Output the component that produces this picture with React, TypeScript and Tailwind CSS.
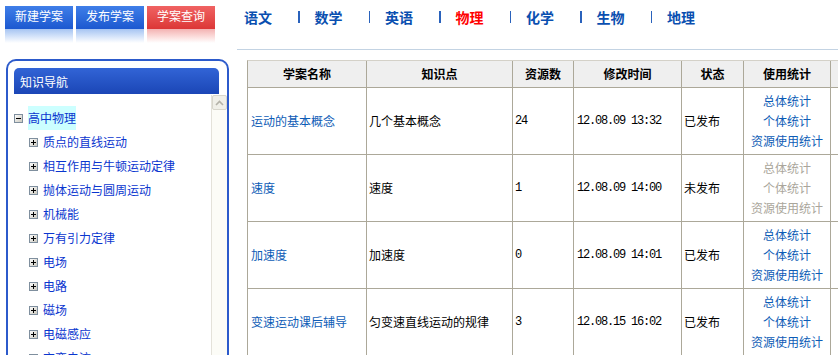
import type { ReactNode } from 'react';

const subjects = ['语文', '数学', '英语', '物理', '化学', '生物', '地理'];

const topics = [
  '质点的直线运动',
  '相互作用与牛顿运动定律',
  '抛体运动与圆周运动',
  '机械能',
  '万有引力定律',
  '电场',
  '电路',
  '磁场',
  '电磁感应',
  '交变电流',
];

type Plan = {
  name: string;
  point: string;
  count: number;
  time: string;
  status: string;
  published: boolean;
};

const plans: Plan[] = [
  { name: '运动的基本概念', point: '几个基本概念', count: 24, time: '12.08.09 13:32', status: '已发布', published: true },
  { name: '速度', point: '速度', count: 1, time: '12.08.09 14:00', status: '未发布', published: false },
  { name: '加速度', point: '加速度', count: 0, time: '12.08.09 14:01', status: '已发布', published: true },
  { name: '变速运动课后辅导', point: '匀变速直线运动的规律', count: 3, time: '12.08.15 16:02', status: '已发布', published: true },
];

const headers = ['学案名称', '知识点', '资源数', '修改时间', '状态', '使用统计', ''];

const TopButton = ({ label, red }: { label: string; red?: boolean }) => (
  <div className="w-[68px] h-[37px] flex flex-col">
    <div
      className={`h-[23px] pt-[3px] text-center text-white text-[12px] leading-[14px] bg-linear-to-b ${
        red ? 'from-[#f06262] to-[#dc3636]' : 'from-[#3f7ee8] to-[#1c58d0]'
      }`}
    >
      {label}
    </div>
    <div
      className={`h-[14px] bg-linear-to-b to-white ${red ? 'from-[#f3b2b2]' : 'from-[#a6c4f2]'}`}
    />
  </div>
);

const TreeBox = ({ open }: { open?: boolean }) => (
  <svg width="9" height="9" viewBox="0 0 9 9" className="shrink-0">
    <defs>
      <linearGradient id={open ? 'gm' : 'gp'} x1="0" y1="0" x2="1" y2="1">
        <stop offset="0" stopColor="#ffffff" />
        <stop offset="1" stopColor="#c8c6bc" />
      </linearGradient>
    </defs>
    <rect x="0.5" y="0.5" width="8" height="8" fill={`url(#${open ? 'gm' : 'gp'})`} stroke="#7f8f9e" />
    <line x1="2" y1="4.5" x2="7" y2="4.5" stroke="#000" />
    {!open && <line x1="4.5" y1="2" x2="4.5" y2="7" stroke="#000" />}
  </svg>
);

const Cell = ({ children, className = '' }: { children?: ReactNode; className?: string }) => (
  <div className={`border-r border-b border-[#aca899] flex items-center ${className}`}>{children}</div>
);

export default function App() {
  return (
    <div className="w-[838px] h-[355px] overflow-hidden bg-white flex font-['Noto_Sans_CJK_SC','Noto_Sans',sans-serif] text-[12px] text-black">
      {/* left column */}
      <div className="w-[237px] shrink-0">
        <div className="flex gap-[3px] pl-[5px] pt-[6px]">
          <TopButton label="新建学案" />
          <TopButton label="发布学案" />
          <TopButton label="学案查询" red />
        </div>

        <div className="ml-[6px] mt-[16px] w-[223px] h-[320px] border-2 border-b-0 border-[#2c5acb] rounded-t-[10px] pt-[7px]">
          <div className="ml-[6px] w-[205px] h-[26px] rounded-t-[5px] bg-linear-to-b from-[#3264d6] to-[#1b46b6] pl-[6px] text-white text-[12px] leading-[27px]">
            知识导航
          </div>

          <div className="mt-[1px] flex h-[280px]">
            <div className="flex-1 pt-[11px] text-[#0a36cf]">
              <div className="h-[24px] flex items-center pl-[6px]">
                <TreeBox open />
                <span className="ml-[5px] bg-[#ccffff] h-[24px] leading-[24px]">高中物理</span>
              </div>
              {topics.map((t) => (
                <div key={t} className="h-[24px] flex items-center pl-[21px]">
                  <TreeBox />
                  <span className="ml-[5px] leading-[24px] whitespace-nowrap">{t}</span>
                </div>
              ))}
            </div>
            <div className="w-[16px] bg-[#fcfcf7] border-l border-[#e4e2da]">
              <div className="h-[15px] bg-[#f0efe8] border border-[#d8d6cc] rounded-[2px] flex items-center justify-center">
                <svg width="9" height="6" viewBox="0 0 9 6">
                  <path d="M1 5 L4.5 1.5 L8 5" fill="none" stroke="#b4b2a8" strokeWidth="1.6" />
                </svg>
              </div>
            </div>
          </div>
        </div>
      </div>

      {/* right column */}
      <div className="flex-1 min-w-0 overflow-hidden">
        <div className="h-[50px] border-b border-[#c3d3e3] pl-[7px]">
          <div className="h-[34px] flex items-center">
            {subjects.map((s, i) => (
              <div key={s} className="flex items-center">
                <span
                  className={`w-[54px] text-[14px] font-bold leading-[18px] ${
                    s === '物理' ? 'text-[#ff0000]' : 'text-[#0a4fb0]'
                  }`}
                >
                  {s}
                </span>
                {i < subjects.length - 1 && <span className="w-[1.5px] h-[12px] bg-[#2a62bc] mr-[15px]" />}
              </div>
            ))}
          </div>
        </div>

        <div className="mt-[10px] ml-[10px] w-max grid grid-cols-[119px_146px_61px_108px_62px_87px_80px] border-l border-t border-l-[#aca899] border-t-[#d4d1c8]">
          {headers.map((h, i) => (
            <Cell key={i} className="h-[27px] justify-center bg-[#efefef] font-bold">
              {h}
            </Cell>
          ))}
          {plans.map((p) => (
            <div key={p.name} className="contents">
              <Cell className="h-[67px] pl-[3px] text-[#0d5cb6] whitespace-nowrap">{p.name}</Cell>
              <Cell className="h-[67px] pl-[2px] whitespace-nowrap">{p.point}</Cell>
              <Cell className="h-[67px] pl-[2px] font-['Liberation_Mono',monospace] text-[12px] tracking-[-1.2px]">
                {p.count}
              </Cell>
              <Cell className="h-[67px] pl-[3px] font-['Liberation_Mono',monospace] text-[12px] tracking-[-1.2px] whitespace-nowrap">
                {p.time}
              </Cell>
              <Cell className="h-[67px] pl-[2px]">{p.status}</Cell>
              <Cell
                className={`h-[67px] flex-col justify-center leading-[20px] ${
                  p.published ? 'text-[#0d5cb6]' : 'text-[#aaa69b]'
                }`}
              >
                <span>总体统计</span>
                <span>个体统计</span>
                <span>资源使用统计</span>
              </Cell>
              <Cell className="h-[67px]" />
            </div>
          ))}
        </div>
      </div>
    </div>
  );
}
